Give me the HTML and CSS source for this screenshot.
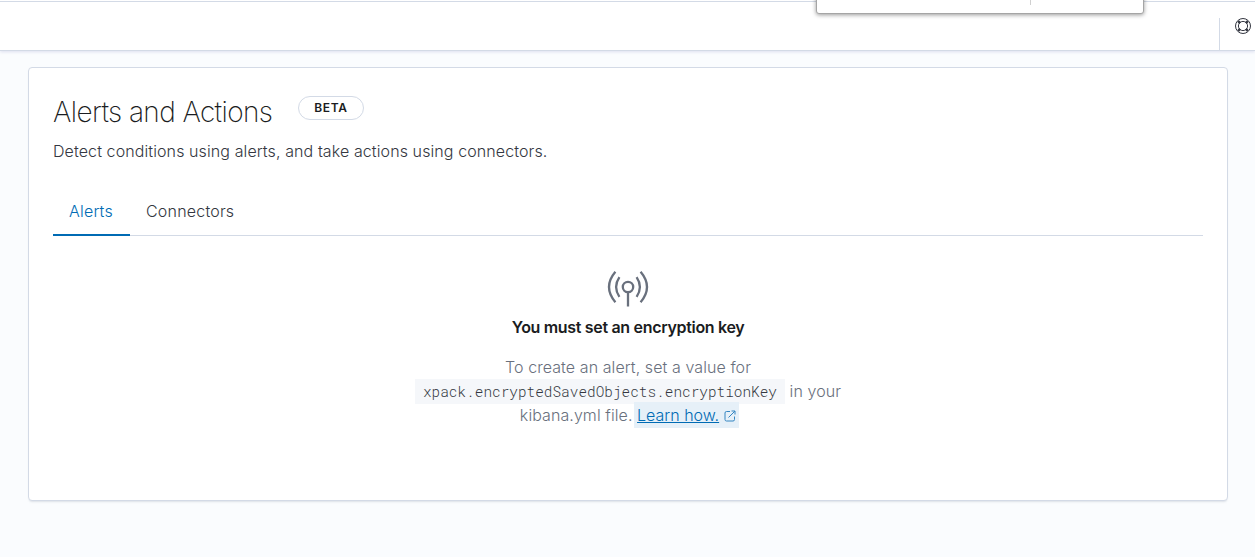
FILE: index.html
```
<!DOCTYPE html>
<html lang="en">
<head>
    <meta charset="UTF-8">
    <title>Alerts and Actions - Kibana</title>
    <link rel="stylesheet" href="styles.css">
</head>

<body>
<header class="header">
    <div class="headerSection">
        <svg width="16" height="16" viewBox="0 0 16 16" fill="none" stroke="#343741">
            <circle cx="8" cy="8" r="7.5"/>
            <circle cx="8" cy="8" r="4.6"/>
            <path stroke-width="2.400" d="M3.200 3.200l1.900 1.900M12.800 3.200l-1.900 1.900M3.200 12.800l1.900-1.900M12.800 12.800l-1.900-1.900"/>
        </svg>
    </div>
</header>
<div class="popup"><span class="popupDivider"></span></div>

<main class="panel">
    <div class="titleRow">
        <h1 class="title">Alerts and Actions</h1>
        <span class="badge">BETA</span>
    </div>
    <p class="description">Detect conditions using alerts, and take actions using connectors.</p>

    <nav class="tabs">
        <a class="tab tabSelected">Alerts</a>
        <a class="tab">Connectors</a>
    </nav>

    <section class="prompt">
        <svg class="promptIcon" width="42" height="38" viewBox="0 0 42 38" fill="none" stroke="#69707d" stroke-width="2.300">
            <circle cx="21" cy="18" r="5.200"/>
            <path d="M21 23v14.500M12.400 8.200Q5.800 18 12.400 27.800M29.600 8.200Q36.200 18 29.600 27.800M8.400 2.800Q-4.400 18 8.400 33.200M33.600 2.800Q46.400 18 33.600 33.200"/>
        </svg>
        <h2 class="promptTitle">You must set an encryption key</h2>
        <p class="promptText">
            To create an alert, set a value for<br>
            <code class="code">xpack.encryptedSavedObjects.encryptionKey</code> in your<br>
            kibana.yml file. <a class="link" href="#"><span class="linkText">Learn how.</span><svg class="linkIcon" width="12" height="12" viewBox="0 0 12 12" fill="none" stroke="#3586c2">
                <path d="M6 1.500H2.500a1.500 1.500 0 0 0-1.500 1.500v6.500A1.500 1.500 0 0 0 2.500 11H9a1.500 1.500 0 0 0 1.500-1.500V6.500M7.500 1h3.500v3.500M11 1L4.500 7.500"/>
            </svg></a>
        </p>
    </section>
</main>
</body>
</html>
```
FILE: styles.css
```
*{
    box-sizing: border-box;
}
body{
    margin: 0;
    height: 557px;
    overflow: hidden;
    background: #fafcfe;
    color: #343741;
    font-family: Inter, "Liberation Sans", sans-serif;
    font-size: 16px;
    font-weight: 300;
    line-height: 24px;
}
h1,h2,p{
    margin: 0;
}
.header{
    display: flex;
    justify-content: flex-end;
    align-items: flex-end;
    height: 51px;
    margin-bottom: 16px;
    background: linear-gradient(#d3dae6, #d3dae6) 0 1px / 100% 1px no-repeat #fff;
    border-bottom: 1px solid #d3dae6;
    box-shadow: 0 1px 3px rgba(110, 110, 180, 0.2);
}
.headerSection{
    width: 36px;
    height: 32px;
    padding-left: 15px;
    border-left: 1px solid #d3dae6;
}
.headerSection svg{
    display: block;
}
/* bottom edge of the dialog hanging over the header */
.popup{
    position: absolute;
    top: -10px;
    left: 816px;
    width: 328px;
    height: 24px;
    padding-left: 213px;
    background: #fff;
    border: 1px solid #a5a5a5;
    border-radius: 3px;
    box-shadow: 0 1px 4px rgba(0, 0, 0, 0.4);
}
.popupDivider{
    display: block;
    width: 1px;
    height: 14px;
    background: #d0d0d0;
}
.panel{
    width: 1200px;
    height: 434px;
    margin-left: 28px;
    padding: 24px;
    background: #fff;
    border: 1px solid #d3dae6;
    border-radius: 4px;
    box-shadow: 0 2px 2px -1px rgba(152, 162, 179, 0.3);
}
.titleRow{
    display: flex;
    padding-top: 4px;
}
.title{
    width: 245px;
    color: #1a1c21;
    font-size: 28px;
    font-weight: 200;
    line-height: 32px;
    letter-spacing: -0.6px;
    white-space: nowrap;
}
.badge{
    width: 66px;
    height: 24px;
    border: 1px solid #d3dae6;
    border-radius: 12px;
    color: #1a1c21;
    font-size: 12px;
    font-weight: 600;
    line-height: 22px;
    letter-spacing: 0.7px;
    text-align: center;
}
.description{
    margin-top: 11px;
    letter-spacing: 0.1px;
}
.tabs{
    display: flex;
    height: 49px;
    margin-top: 24px;
    border-bottom: 1px solid #d3dae6;
}
.tab{
    height: 49px;
    padding: 12px 16px;
    letter-spacing: 0.2px;
}
.tabSelected{
    width: 77px;
    border-bottom: 2px solid #006bb4;
    color: #006bb4;
}
.prompt{
    padding-top: 33px;
    text-align: center;
}
.promptIcon{
    display: block;
    margin: 0 auto;
}
.promptTitle{
    margin-top: 8px;
    color: #1a1c21;
    font-size: 16px;
    font-weight: 600;
    line-height: 24px;
    letter-spacing: -0.32px;
}
.promptText{
    margin-top: 16px;
    color: #69707d;
    letter-spacing: 0.08px;
}
.code{
    padding: 3px 8px;
    background: #f5f7fa;
    color: #343741;
    font-family: "Roboto Mono", "Liberation Mono", monospace;
    font-size: 14.4px;
    line-height: 18px;
    letter-spacing: 0;
}
.link{
    color: #006bb4;
    background: #e6f0f8;
    box-shadow: 0 0 0 3px #e6f0f8;
    letter-spacing: 0;
    text-decoration: none;
}
.linkText{
    text-decoration: underline;
}
.linkIcon{
    margin-left: 5px;
    vertical-align: -1px;
}
```
